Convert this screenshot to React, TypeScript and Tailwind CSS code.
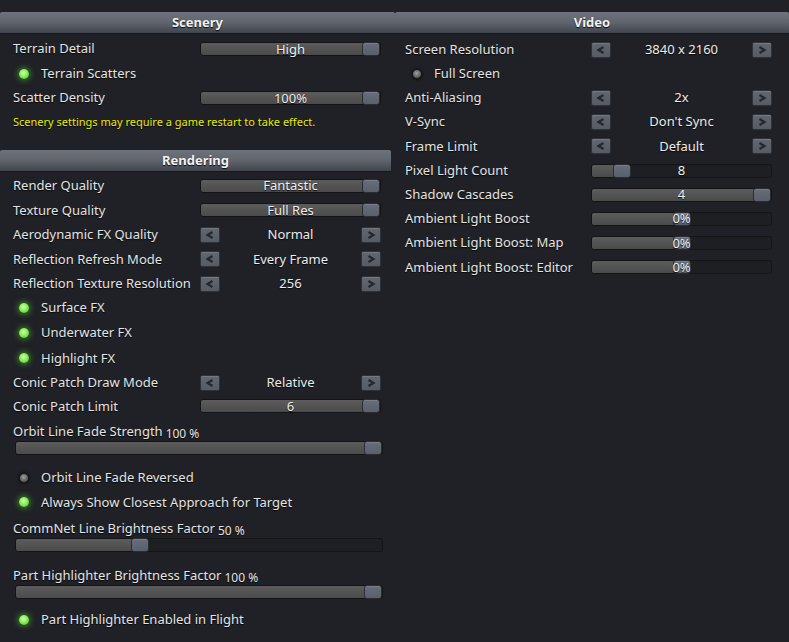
import React from 'react';

const font = "font-['Noto_Sans',sans-serif]";
const shadow = '[text-shadow:0_1px_1px_rgba(0,0,0,0.85)]';

function Header({ title }: { title: string }) {
  return (
    <div className="h-[22px] flex flex-col border-b border-[#15161a]">
      <div className="relative flex-1 flex items-center justify-center bg-gradient-to-b from-[#6d727b] via-[#60646d] via-50% to-[#41454d] rounded-t-[2px]">
        <span className={`text-[13px] font-bold text-[#f2f2f2] ${shadow}`}>{title}</span>
      </div>
    </div>
  );
}

function Row({ label, children, h = 'h-[24.5px]', labelW = 'w-[187px]' }: { label: string; children?: React.ReactNode; h?: string; labelW?: string }) {
  return (
    <div className={`${h} flex items-center`}>
      <div className={`${labelW} shrink-0 text-[13px] text-[#e4e4e4] whitespace-nowrap ${shadow}`}>{label}</div>
      <div className="w-[181px]">{children}</div>
    </div>
  );
}

function Track({ pos, text }: { pos: number; text?: string }) {
  // pos: 0..1 knob position along the track
  const knobW = 18;
  return (
    <div className="relative h-[14px] rounded-[3px] border border-[#131416] bg-[#1e1f22]">
      <div
        className="absolute left-0 top-0 bottom-0 rounded-l-[2px] bg-gradient-to-b from-[#5c5c5c] to-[#4b4b4b]"
        style={{ width: `calc(${pos} * (100% - ${knobW}px) + ${knobW / 2}px)` }}
      />
      <div
        className="absolute -top-[1px] h-[14px] w-[18px] rounded-[3px] border border-[#2b2d33] bg-gradient-to-b from-[#686d7a] to-[#5a5f6c] shadow-[inset_0_1px_0_rgba(255,255,255,0.12)]"
        style={{ left: `calc(${pos} * (100% - ${knobW}px))` }}
      />
      {text && (
        <div className={`absolute inset-0 flex items-center justify-center text-[13px] leading-none text-[#f0f0f0] ${shadow}`}>
          {text}
        </div>
      )}
    </div>
  );
}

function Arrow({ dir }: { dir: 'l' | 'r' }) {
  return (
    <div className="w-[20px] h-[16px] rounded-[2px] border border-[#2f3238] bg-gradient-to-b from-[#62676f] to-[#575b64] flex items-center justify-center shadow-[inset_0_1px_0_rgba(255,255,255,0.12)]">
      <svg width="10" height="10" viewBox="0 0 10 10">
        <polyline
          points={dir === 'l' ? '7.5,2 2.5,5 7.5,8' : '2.5,2 7.5,5 2.5,8'}
          fill="none"
          stroke="#25272c"
          strokeWidth="2.2"
        />
      </svg>
    </div>
  );
}

function Stepper({ value }: { value: string }) {
  return (
    <div className="flex items-center justify-between">
      <Arrow dir="l" />
      <span className={`text-[13px] text-[#ececec] ${shadow}`}>{value}</span>
      <Arrow dir="r" />
    </div>
  );
}

function Dot({ on }: { on: boolean }) {
  return on ? (
    <div className="w-[10px] h-[10px] rounded-full bg-[radial-gradient(circle_at_45%_40%,#d8ffb8_0%,#8ef25e_40%,#45b52a_100%)] shadow-[0_0_5px_2px_rgba(70,170,40,0.55)]" />
  ) : (
    <div className="w-[10px] h-[10px] rounded-full border border-[#1a1a1a] bg-[radial-gradient(circle_at_45%_40%,#a0a0a0_0%,#6e6e6e_45%,#404040_100%)] shadow-[0_0_2px_1px_rgba(0,0,0,0.5)]" />
  );
}

function Toggle({ label, on, h = 'h-[24.5px]', ml = 'ml-[6px]' }: { label: string; on: boolean; h?: string; ml?: string }) {
  return (
    <div className={`${h} flex items-center`}>
      <div className={ml}>
        <Dot on={on} />
      </div>
      <span className={`ml-[12px] text-[13px] text-[#e4e4e4] ${shadow}`}>{label}</span>
    </div>
  );
}

function WideSlider({ label, value, pos, labelH }: { label: string; value: string; pos: number; labelH: string }) {
  return (
    <div>
      <div className={`${labelH} flex items-end`}>
        <div className="h-[18px] flex items-center">
          <span className={`text-[13px] text-[#e4e4e4] ${shadow}`}>{label}</span>
          <span className={`ml-[3px] text-[12px] text-[#e4e4e4] translate-y-[2px] ${shadow}`}>{value}</span>
        </div>
      </div>
      <div className="w-[368px] ml-[2px]">
        <Track pos={pos} />
      </div>
    </div>
  );
}

export default function App() {
  return (
    <div className={`w-[789px] h-[642px] overflow-hidden bg-[#202126] flex ${font}`}>
      {/* left column */}
      <div className="w-[395px] shrink-0 pt-[12px]">
        <Header title="Scenery" />
        <div className="px-[13px] pt-[2.75px]">
          <Row label="Terrain Detail">
            <Track pos={1} text="High" />
          </Row>
          <Toggle label="Terrain Scatters" on />
          <Row label="Scatter Density">
            <Track pos={1} text="100%" />
          </Row>
          <div className={`h-[24.5px] flex items-center text-[11px] text-[#ecec00] ${shadow}`}>
            Scenery settings may require a game restart to take effect.
          </div>
        </div>
        <div className="mt-[15px] w-[391px]">
          <Header title="Rendering" />
        </div>
        <div className="px-[13px] pt-[1.75px]">
          <Row label="Render Quality">
            <Track pos={1} text="Fantastic" />
          </Row>
          <Row label="Texture Quality">
            <Track pos={1} text="Full Res" />
          </Row>
          <Row label="Aerodynamic FX Quality">
            <Stepper value="Normal" />
          </Row>
          <Row label="Reflection Refresh Mode">
            <Stepper value="Every Frame" />
          </Row>
          <Row label="Reflection Texture Resolution">
            <Stepper value="256" />
          </Row>
          <Toggle label="Surface FX" on h="h-[24px]" />
          <Toggle label="Underwater FX" on h="h-[25px]" />
          <Toggle label="Highlight FX" on h="h-[26.5px]" />
          <Row label="Conic Patch Draw Mode" h="h-[22.5px]">
            <Stepper value="Relative" />
          </Row>
          <Row label="Conic Patch Limit">
            <Track pos={1} text="6" />
          </Row>
          <WideSlider label="Orbit Line Fade Strength" value="100 %" pos={1} labelH="h-[22px]" />
          <div className="h-[11px]" />
          <Toggle label="Orbit Line Fade Reversed" on={false} />
          <Toggle label="Always Show Closest Approach for Target" on />
          <WideSlider label="CommNet Line Brightness Factor" value="50 %" pos={0.33} labelH="h-[23px]" />
          <WideSlider label="Part Highlighter Brightness Factor" value="100 %" pos={1} labelH="h-[33px]" />
          <div className="h-[9px]" />
          <Toggle label="Part Highlighter Enabled in Flight" on />
        </div>
      </div>

      {/* right column */}
      <div className="flex-1 pt-[12px]">
        <Header title="Video" />
        <div className="pl-[10px] pr-[17px] pt-[3.5px]">
          <Row label="Screen Resolution" h="h-[24.2px]" labelW="w-[186px]">
            <Stepper value="3840 x 2160" />
          </Row>
          <Toggle label="Full Screen" on={false} h="h-[24.2px]" ml="ml-[7px]" />
          <Row label="Anti-Aliasing" h="h-[24.2px]" labelW="w-[186px]">
            <Stepper value="2x" />
          </Row>
          <Row label="V-Sync" h="h-[24.2px]" labelW="w-[186px]">
            <Stepper value="Don't Sync" />
          </Row>
          <Row label="Frame Limit" h="h-[24.2px]" labelW="w-[186px]">
            <Stepper value="Default" />
          </Row>
          <Row label="Pixel Light Count" h="h-[24.2px]" labelW="w-[186px]">
            <Track pos={0.13} text="8" />
          </Row>
          <Row label="Shadow Cascades" h="h-[24.2px]" labelW="w-[186px]">
            <Track pos={1} text="4" />
          </Row>
          <Row label="Ambient Light Boost" h="h-[24.2px]" labelW="w-[186px]">
            <Track pos={0.5} text="0%" />
          </Row>
          <Row label="Ambient Light Boost: Map" h="h-[24.2px]" labelW="w-[186px]">
            <Track pos={0.5} text="0%" />
          </Row>
          <Row label="Ambient Light Boost: Editor" h="h-[24.2px]" labelW="w-[186px]">
            <Track pos={0.5} text="0%" />
          </Row>
        </div>
      </div>
    </div>
  );
}
